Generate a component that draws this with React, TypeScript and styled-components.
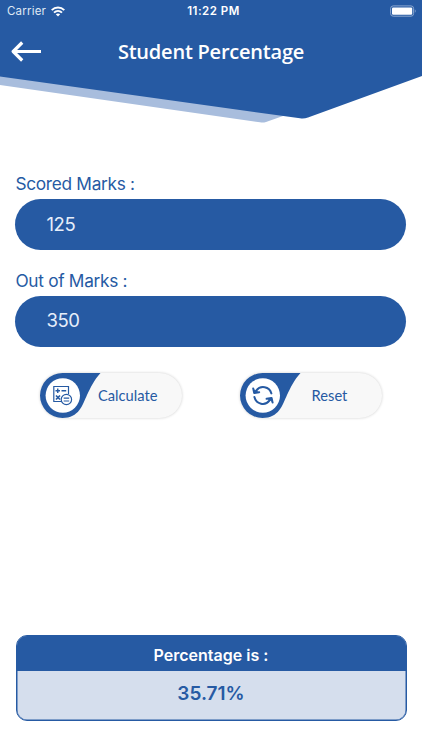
import React, { useState } from "react";
import styled, { createGlobalStyle } from "styled-components";

const BLUE = "#265aa3";

const GlobalStyle = createGlobalStyle`
  * { box-sizing: border-box; }
  body { margin: 0; background: #fff; font-family: Inter, "Liberation Sans", sans-serif; }
`;

const Screen = styled.div`
  width: 422px;
  height: 750px;
  display: flex;
  flex-direction: column;
  overflow: hidden;
  background: #fff;
`;

const Header = styled.header`
  position: relative;
  height: 126px;
  flex: none;
  color: #fff;
`;

const HeaderShape = styled.svg`
  position: absolute;
  inset: 0;
`;

const HeaderContent = styled.div`
  position: relative;
`;

const StatusBar = styled.div`
  display: grid;
  grid-template-columns: 1fr auto 1fr;
  align-items: center;
  height: 22px;
  padding: 0 6px 0 7px;
  font-size: 11.5px;
  line-height: 22px;
`;

const Carrier = styled.div`
  display: flex;
  align-items: center;
  gap: 5px;
  letter-spacing: 0.2px;
  color: #dfe8f4;
`;

const Clock = styled.div`
  font-weight: 600;
  font-size: 11.5px;
  letter-spacing: 0.5px;
  padding-left: 4px;
`;

const Battery = styled.svg`
  justify-self: end;
  margin-bottom: 1px;
`;

const TitleBar = styled.div`
  display: grid;
  grid-template-columns: 60px 1fr 60px;
  align-items: center;
  height: 58px;
`;

const BackButton = styled.button`
  display: flex;
  border: 0;
  padding: 0 0 0 11px;
  background: none;
  color: inherit;
`;

const Title = styled.h1`
  margin: 1px 0 0;
  text-align: center;
  white-space: nowrap;
  font: 600 20px/28px "Open Sans", sans-serif;
  letter-spacing: -0.22px;
`;

const Form = styled.main`
  display: flex;
  flex-direction: column;
  padding: 47px 16px 0 15.4px;
`;

const Field = styled.label`
  display: flex;
  flex-direction: column;
  height: 96.7px;
`;

const FieldLabel = styled.span`
  height: 26px;
  line-height: 21px;
  font-size: 17.3px;
  letter-spacing: -0.3px;
  color: ${BLUE};
`;

const Input = styled.input`
  width: 100%;
  height: 51px;
  border: 0;
  border-radius: 26px;
  outline: 0;
  padding: 0 31px 2px;
  background: ${BLUE};
  color: #e6eefa;
  font: 400 18.5px Inter, sans-serif;
  letter-spacing: -0.35px;
`;

const Actions = styled.div`
  display: flex;
  gap: 58.5px;
  padding: 6.4px 0 0 24.6px;
`;

const ActionButton = styled.button`
  display: flex;
  align-items: center;
  width: 142px;
  height: 45px;
  border: 0;
  border-radius: 23px;
  padding: 0;
  background: #f8f8f8;
  box-shadow: 0 0 3px rgba(0, 0, 0, 0.2);
  color: ${BLUE};
  font: 400 14.7px Lato, sans-serif;
`;

const ActionLabel = styled.span<{ $inset: number }>`
  flex: 1;
  text-align: center;
  padding: 0 ${(p) => p.$inset}px 1px 0;
`;

const BadgeArt = styled.svg`
  flex: none;
  margin-right: -4px;
`;

const Result = styled.section`
  margin: auto 15.5px 29px;
  height: 86px;
  flex: none;
  border: 1.5px solid ${BLUE};
  border-radius: 11px;
  overflow: hidden;
  background: #d5deed;
  box-shadow: inset 0 0 0 0.5px ${BLUE};
  text-align: center;
`;

const ResultTitle = styled.div`
  height: 34.5px;
  line-height: 38px;
  background: ${BLUE};
  color: #fff;
  font-size: 16px;
  font-weight: 600;
`;

const ResultValue = styled.div`
  line-height: 45px;
  color: ${BLUE};
  font-size: 19px;
  font-weight: 600;
`;

function Badge({ children }: { children: React.ReactNode }) {
  return (
    <BadgeArt width="62" height="45" viewBox="0 0 62 45" fill="none">
      <path d="M22.5 0H60.5C54 7 51 14 47 22C42.5 32 39 45 22.5 45A22.5 22.5 0 0 1 22.5 0Z" fill={BLUE} />
      <circle cx="22.8" cy="22.5" r="17.2" fill="#fff" />
      {children}
    </BadgeArt>
  );
}

function CalculateGlyph() {
  return (
    <g stroke={BLUE} strokeWidth="1.2">
      <path d="M21.5 28.5H13.8V13.5H28.5V21" />
      <path d="M15.5 17.7H20M17.75 15.5V20M21.5 17.7H26.2" strokeWidth="1.4" />
      <path d="M16 22.5L20 26.5M20 22.5L16 26.5" strokeWidth="1.7" />
      <circle cx="26.4" cy="26.5" r="5.2" fill="#fff" />
      <path d="M23.7 25.2H29.2M23.7 28H29.2" />
    </g>
  );
}

function ResetGlyph() {
  return (
    <g stroke={BLUE} strokeWidth="2" strokeLinecap="round" strokeLinejoin="round">
      <path d="M16.2 17.6C20.6 11.8 29.5 13.6 31.4 20.4M14.4 24C16.2 31.4 25.2 33.2 29.6 27.4" />
      <path d="M13.2 15.4L14.2 20L19.2 19.2M26.6 25.8L31.6 25L32.6 29.6" />
      <path d="M14.4 19.6L13.8 16.8L17.6 18.8ZM31.4 25.4L32 28.2L28.2 26.2Z" fill={BLUE} strokeWidth="0.8" />
    </g>
  );
}

export default function App() {
  const [scored, setScored] = useState("125");
  const [total, setTotal] = useState("350");
  const [result, setResult] = useState("35.71%");

  const calculate = () => {
    const value = (Number(scored) / Number(total)) * 100;
    setResult(Number.isFinite(value) ? `${value.toFixed(2)}%` : "");
  };
  const reset = () => {
    setScored("");
    setTotal("");
    setResult("");
  };

  return (
    <Screen>
      <GlobalStyle />
      <Header>
        <HeaderShape width="422" height="126">
          <path d="M0 70L290 112L283 116L266 122Q263 123 260 122.3L0 85Z" fill="#a8bddd" />
          <path d="M0 0H422V76L308 117.5Q304 119 300 118.3L0 76.5Z" fill={BLUE} />
        </HeaderShape>
        <HeaderContent>
          <StatusBar>
            <Carrier>
              <span>Carrier</span>
              <svg width="14" height="11" viewBox="0 0 14 11" fill="none" stroke="#fff" strokeWidth="1.9">
                <path d="M0.7 4.1C4.3 0.6 9.7 0.6 13.3 4.1M3 6.6C5.3 4.4 8.7 4.4 11 6.6" />
                <path d="M7 10.5L4.8 8.3C6.1 7.1 7.9 7.1 9.2 8.3Z" fill="#fff" stroke="none" />
              </svg>
            </Carrier>
            <Clock>11:22 PM</Clock>
            <Battery width="26" height="12" viewBox="0 0 26 12">
              <rect x="0.6" y="0.9" width="23" height="10.3" rx="2.6" fill="none" stroke="#8ba7d0" />
              <rect x="2" y="2.4" width="20.2" height="7.3" rx="1.2" fill="#fff" />
              <path d="M24.8 4.2Q26.6 6 24.8 7.8Z" fill="#8ba7d0" />
            </Battery>
          </StatusBar>
          <TitleBar>
            <BackButton aria-label="Back">
              <svg width="31" height="22" viewBox="0 0 31 22" fill="none" stroke="#fff" strokeWidth="3.2">
                <path d="M2.5 11.5H30M11.2 2.5L2.2 11.5L11.2 20.5" strokeLinejoin="round" />
              </svg>
            </BackButton>
            <Title>Student Percentage</Title>
          </TitleBar>
        </HeaderContent>
      </Header>
      <Form>
        <Field>
          <FieldLabel>Scored Marks :</FieldLabel>
          <Input value={scored} onChange={(e) => setScored(e.target.value)} />
        </Field>
        <Field>
          <FieldLabel>Out of Marks :</FieldLabel>
          <Input value={total} onChange={(e) => setTotal(e.target.value)} />
        </Field>
        <Actions>
          <ActionButton onClick={calculate}>
            <Badge><CalculateGlyph /></Badge>
            <ActionLabel $inset={25}>Calculate</ActionLabel>
          </ActionButton>
          <ActionButton onClick={reset}>
            <Badge><ResetGlyph /></Badge>
            <ActionLabel $inset={22}>Reset</ActionLabel>
          </ActionButton>
        </Actions>
      </Form>
      <Result>
        <ResultTitle>Percentage is :</ResultTitle>
        <ResultValue>{result}</ResultValue>
      </Result>
    </Screen>
  );
}
